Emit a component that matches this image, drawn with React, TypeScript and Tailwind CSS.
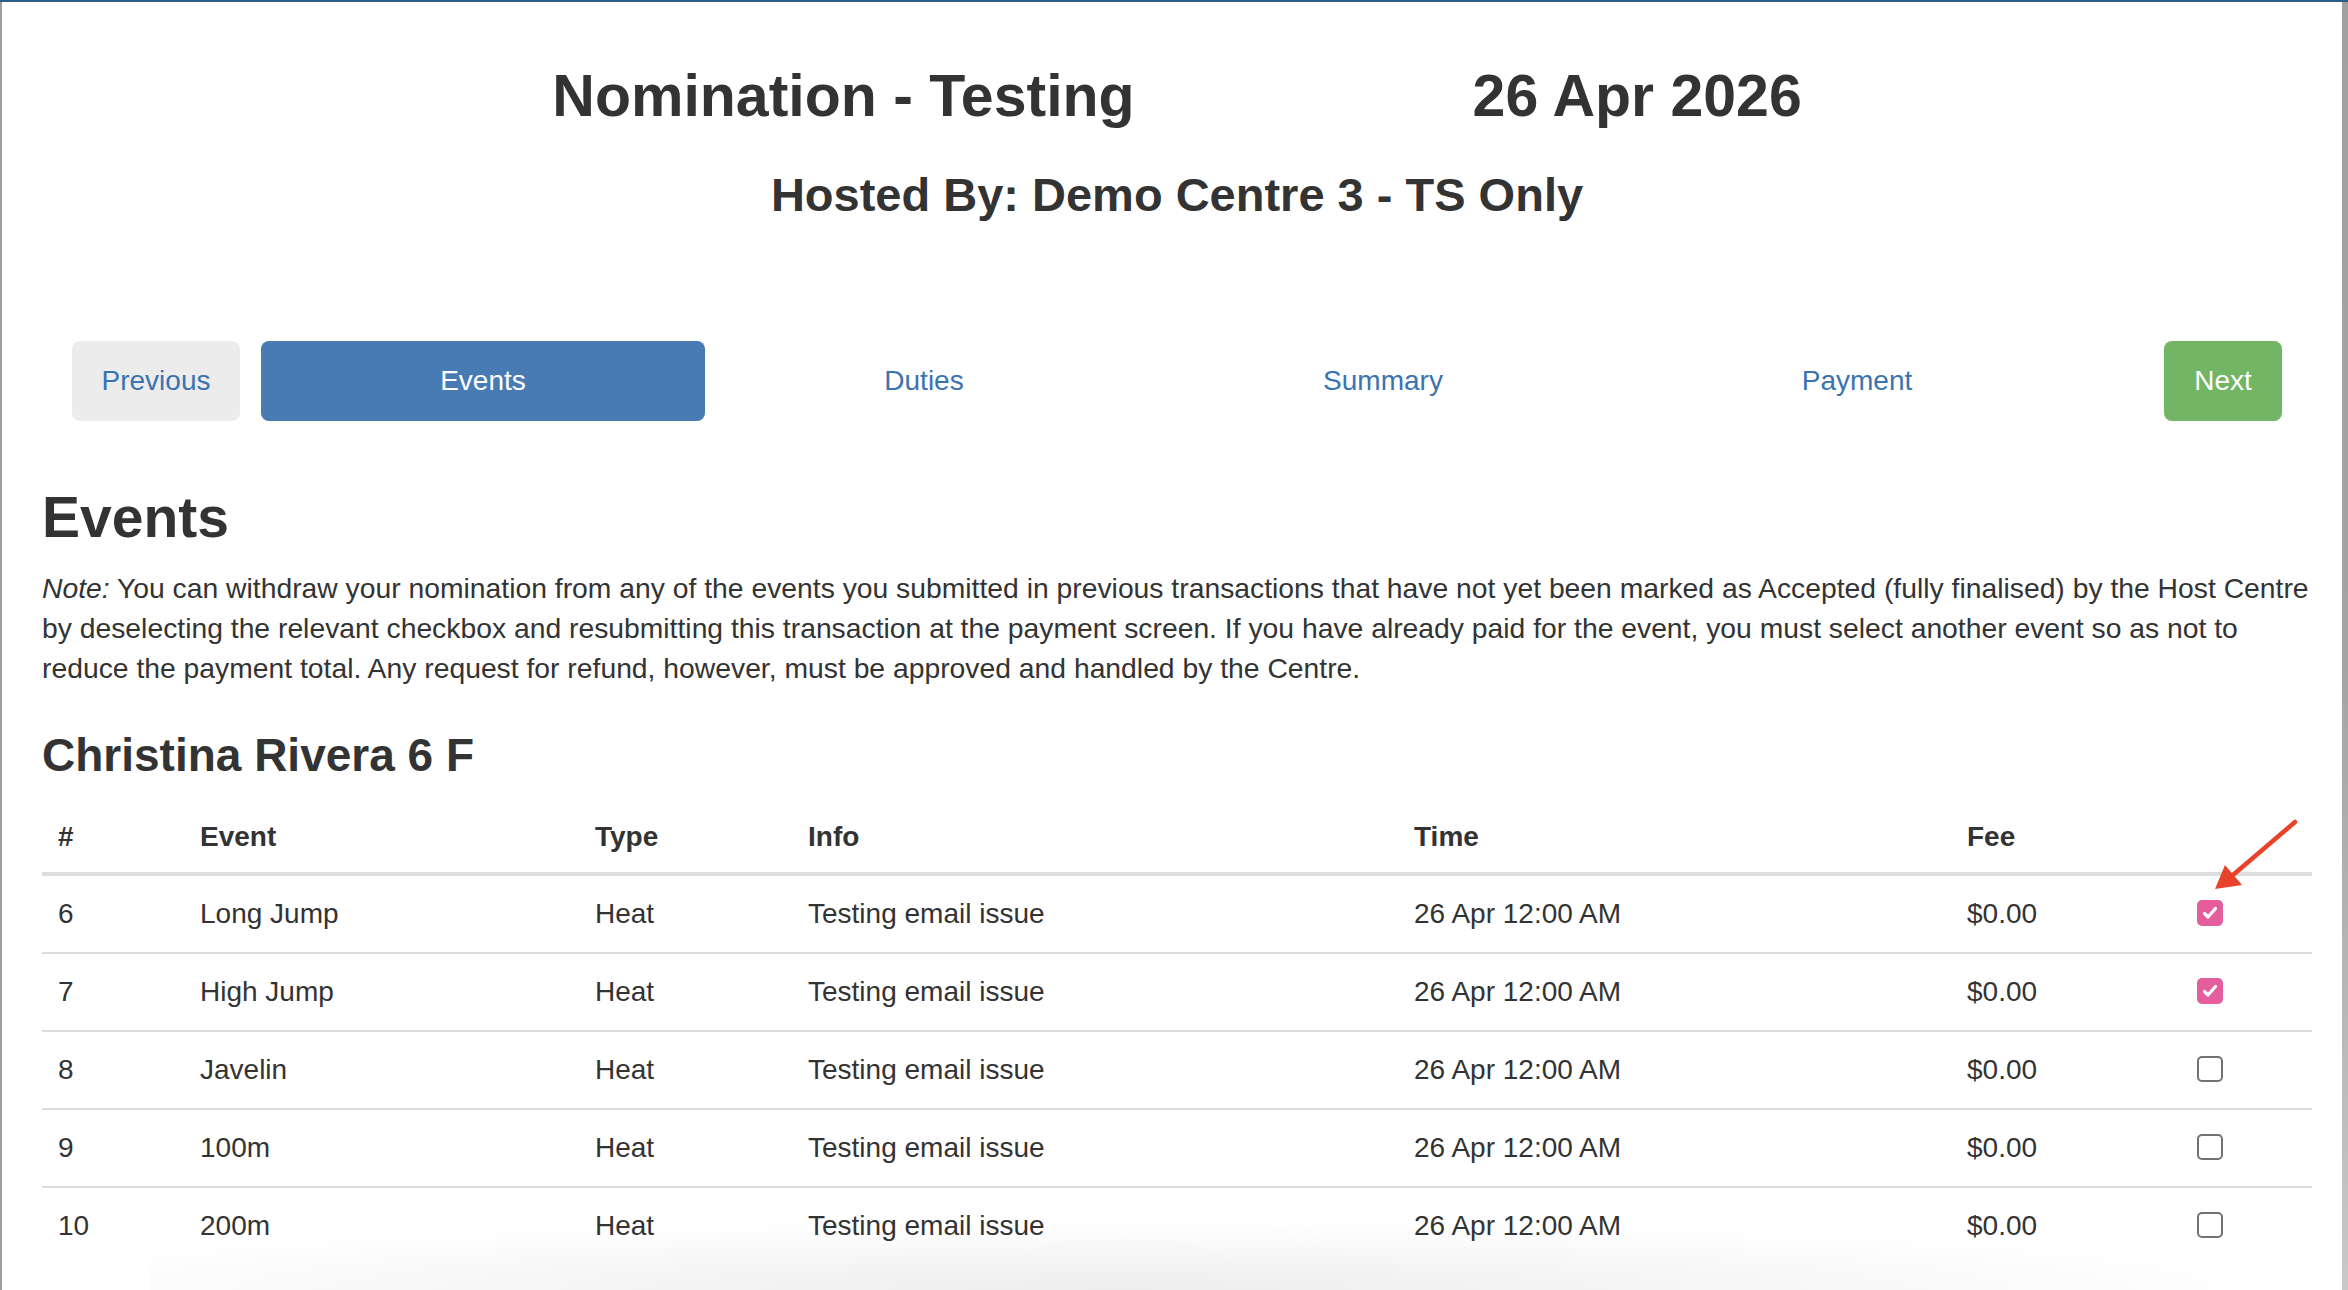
import React from 'react';

const ROWS = [
  { n: 6, event: 'Long Jump', checked: true },
  { n: 7, event: 'High Jump', checked: true },
  { n: 8, event: 'Javelin', checked: false },
  { n: 9, event: '100m', checked: false },
  { n: 10, event: '200m', checked: false },
];

const COLS = [142, 395, 213, 606, 553, 230, 131];

function Checkbox({ checked }: { checked: boolean }) {
  if (checked) {
    return (
      <span className="inline-flex w-[26px] h-[26px] rounded-[5px] bg-[#e45d9d] items-center justify-center align-middle -translate-y-[3px]">
        <svg width="18" height="18" viewBox="0 0 18 18" fill="none" stroke="#fff" strokeWidth="3.2" strokeLinecap="round" strokeLinejoin="round">
          <path d="M3.5 9.5l3.5 3.5L14.5 4.5" />
        </svg>
      </span>
    );
  }
  return <span className="inline-block w-[26px] h-[26px] rounded-[5px] border-2 border-[#727272] bg-white align-middle -translate-y-[3px]" />;
}

export default function App() {
  return (
    <div className="relative w-[2348px] h-[1290px] overflow-hidden bg-white flex flex-col text-[#333] font-['Liberation_Sans',Arial,sans-serif]">
      <div className="h-[2px] bg-[#2c5c87]" />
      <div className="flex flex-1 min-h-0">
        <div className="w-[2px] bg-[#9f9f9f]" />

        <main className="flex-1 pl-[40px] pr-[30px]">
          {/* Title */}
          <div className="mt-[65px] flex justify-center gap-[338px] text-[59px] leading-none font-bold">
            <h1>Nomination - Testing</h1>
            <div>26 Apr 2026</div>
          </div>
          <h3 className="mt-[45px] text-center text-[47px] leading-none font-bold">Hosted By: Demo Centre 3 - TS Only</h3>

          {/* Steps */}
          <nav className="mt-[123px] px-[30px] flex h-[80px] text-[28px]">
            <button className="w-[168px] rounded-[8px] bg-[#ececec] text-[#3a74b0]">Previous</button>
            <button className="ml-[21px] w-[444px] rounded-[8px] bg-[#487ab3] text-white">Events</button>
            <div className="w-[438px] flex items-center justify-center text-[#3a74b0]">Duties</div>
            <div className="w-[480px] flex items-center justify-center text-[#3a74b0]">Summary</div>
            <div className="w-[468px] flex items-center justify-center text-[#3a74b0]">Payment</div>
            <button className="ml-auto w-[118px] rounded-[8px] bg-[#72b565] text-white">Next</button>
          </nav>

          <h2 className="mt-[68px] text-[57px] leading-none font-bold">Events</h2>
          <p className="mt-[22px] text-[28.3px] leading-[40px] whitespace-nowrap">
            <em>Note:</em> You can withdraw your nomination from any of the events you submitted in previous transactions that have not yet been marked as Accepted (fully finalised) by the Host Centre
            <br />
            by deselecting the relevant checkbox and resubmitting this transaction at the payment screen. If you have already paid for the event, you must select another event so as not to
            <br />
            reduce the payment total. Any request for refund, however, must be approved and handled by the Centre.
          </p>

          <h3 className="mt-[44px] text-[46px] leading-none font-bold">Christina Rivera 6 F</h3>

          <table className="mt-[18px] w-full table-fixed border-collapse text-[28px] leading-[40px]">
            <colgroup>
              {COLS.map((w, i) => (
                <col key={i} style={{ width: w }} />
              ))}
            </colgroup>
            <thead>
              <tr>
                {['#', 'Event', 'Type', 'Info', 'Time', 'Fee', ''].map((h, i) => (
                  <th key={i} className="px-4 pt-[21px] pb-[15px] text-left font-bold border-b-4 border-[#ddd]">{h}</th>
                ))}
              </tr>
            </thead>
            <tbody>
              {ROWS.map(r => (
                <tr key={r.n}>
                  <td className="px-4 py-[18px] border-t-2 border-[#ddd]">{r.n}</td>
                  <td className="px-4 py-[18px] border-t-2 border-[#ddd]">{r.event}</td>
                  <td className="px-4 py-[18px] border-t-2 border-[#ddd]">Heat</td>
                  <td className="px-4 py-[18px] border-t-2 border-[#ddd]">Testing email issue</td>
                  <td className="px-4 py-[18px] border-t-2 border-[#ddd]">26 Apr 12:00 AM</td>
                  <td className="px-4 py-[18px] border-t-2 border-[#ddd]">$0.00</td>
                  <td className="px-4 py-[18px] border-t-2 border-[#ddd]">
                    <Checkbox checked={r.checked} />
                  </td>
                </tr>
              ))}
            </tbody>
          </table>
        </main>

        <div className="w-[6px] bg-gradient-to-b from-[#a1a1a1] via-[#a3a3a3] to-[#c8c8c8]" />
      </div>

      {/* annotation arrow */}
      <svg className="absolute left-[2200px] top-[810px]" width="100" height="85" viewBox="0 0 100 85">
        <line x1="95" y1="12" x2="33" y2="65" stroke="#e8432a" strokeWidth="4.5" strokeLinecap="round" />
        <polygon points="15,79 25,55 42,75" fill="#e8432a" />
      </svg>

      {/* window shadow at bottom */}
      <div className="pointer-events-none absolute bottom-0 left-[150px] right-[40px] h-[70px] bg-[radial-gradient(ellipse_55%_100%_at_45%_100%,rgba(0,0,0,0.07),transparent)]" />
    </div>
  );
}
